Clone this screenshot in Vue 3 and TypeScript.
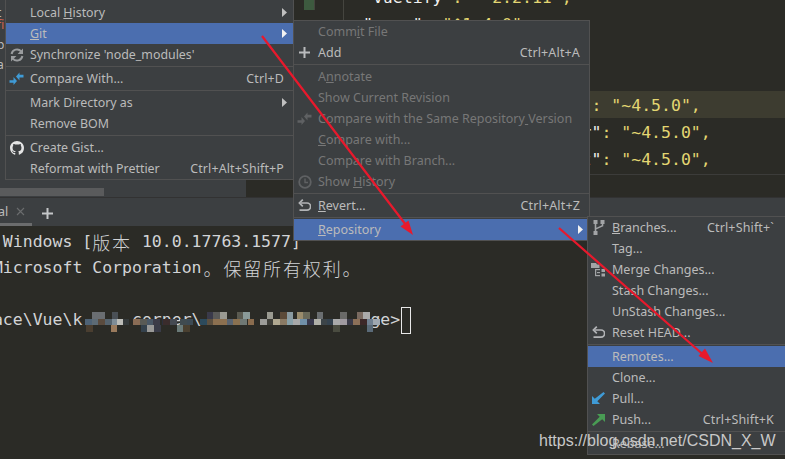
<script setup lang="ts">
type Row = { label?: string; mn?: number; sep?: boolean; off?: boolean; hl?: boolean; sub?: boolean; keys?: string; icon?: string };

const main: Row[] = [
  { label: 'Local History', mn: 6, sub: true },
  { label: 'Git', mn: 0, sub: true, hl: true },
  { label: "Synchronize 'node_modules'", icon: 'sync' },
  { sep: true },
  { label: 'Compare With...', icon: 'compare', keys: 'Ctrl+D' },
  { sep: true },
  { label: 'Mark Directory as', sub: true },
  { label: 'Remove BOM' },
  { sep: true },
  { label: 'Create Gist...', icon: 'github' },
  { label: 'Reformat with Prettier', keys: 'Ctrl+Alt+Shift+P' },
];
const git: Row[] = [
  { label: 'Commit File', mn: 4, off: true },
  { label: 'Add', icon: 'plus', keys: 'Ctrl+Alt+A' },
  { sep: true },
  { label: 'Annotate', mn: 1, off: true },
  { label: 'Show Current Revision', off: true },
  { label: 'Compare with the Same Repository Version', mn: 32, off: true, icon: 'compareOff' },
  { label: 'Compare with...', mn: 0, off: true },
  { label: 'Compare with Branch...', off: true },
  { label: 'Show History', mn: 5, off: true, icon: 'clock' },
  { sep: true },
  { label: 'Revert...', mn: 0, icon: 'undo', keys: 'Ctrl+Alt+Z' },
  { sep: true },
  { label: 'Repository', mn: 0, sub: true, hl: true },
];
const repo: Row[] = [
  { label: 'Branches...', mn: 0, icon: 'branch', keys: 'Ctrl+Shift+`' },
  { label: 'Tag...' },
  { label: 'Merge Changes...', icon: 'merge' },
  { label: 'Stash Changes...' },
  { label: 'UnStash Changes...' },
  { label: 'Reset HEAD...', icon: 'undo' },
  { sep: true },
  { label: 'Remotes...', hl: true },
  { label: 'Clone...' },
  { label: 'Pull...', icon: 'pull' },
  { label: 'Push...', icon: 'push', keys: 'Ctrl+Shift+K' },
  { sep: true },
  { label: 'Rebase...' },
];
const menus = [
  { id: 'main', rows: main },
  { id: 'git', rows: git },
  { id: 'repo', rows: repo },
];

const code = [
  { key: '"vuetify"', val: ':  "2.2.11",' },
  { key: '"sass"', val: ': "^1.4.0",' },
  { key: '', val: '' },
  { key: '', val: '' },
  { key: '"@vue/cli-plugin-babel"', val: ': "~4.5.0",', active: true },
  { key: '"@vue/cli-plugin-router"', val: ': "~4.5.0",' },
  { key: '"@vue/cli-plugin-eslint"', val: ': "~4.5.0",' },
];

const term = [
  [{ t: 'Microsoft Windows [' }, { t: '版本', cjk: true }, { t: ' 10.0.17763.1577]' }],
  [{ t: '(c) 2018 Microsoft Corporation' }, { t: '。保留所有权利。', cjk: true, shift: true }],
  [],
  [{ t: 'D:\\Workspace\\Vue\\k   l corner\\' + ' '.repeat(17) + 'ge>' }],
];

// pixelation of the hidden path: [x in 1/3 px from 70, row, colour]
const pixels: [number, number, string][] = [
  [45, 1, '#4e6275'], [65, 1, '#5d6b75'], [85, 1, '#5a4b3e'], [105, 1, '#55636e'], [125, 1, '#7f8d97'], [140, 1, '#bdbdb8'], [158, 1, '#34393a'],
  [190, 1, '#8a6c55'], [210, 1, '#595a55'], [230, 1, '#4a5866'], [250, 1, '#3c3c48'], [280, 1, '#3a2c2c'], [300, 1, '#454a52'], [330, 1, '#404b50'], [350, 1, '#3c4a54'],
  [390, 1, '#2c4a5c'], [410, 1, '#5c5040'], [430, 1, '#8c7050'], [450, 1, '#8c7050'], [470, 1, '#5a6470'], [490, 1, '#8a7150'], [510, 1, '#6f7874'], [533, 1, '#8a6c4e'],
  [570, 1, '#9c9c98'], [590, 1, '#3e3e38'], [610, 1, '#b0a890'], [630, 1, '#8a7a64'], [650, 1, '#88a0a8'], [670, 1, '#a8a8a8'], [690, 1, '#7090a8'], [712, 1, '#38384c'],
  [732, 1, '#b0b0a8'], [752, 1, '#3c4448'], [772, 1, '#34424e'], [790, 1, '#aaaaaa'], [810, 1, '#a09aa0'], [830, 1, '#3a3a48'], [850, 1, '#8c7058'], [870, 1, '#3c2828'], [890, 1, '#708090'], [910, 1, '#a0a8b0'],
  [65, 0, '#6a6e72'], [85, 0, '#6a6e72'], [125, 0, '#4a5056'],
  [410, 0, '#3a3a4a'], [430, 0, '#5a5a58'], [450, 0, '#9a9a92'], [500, 0, '#5a5a50'], [520, 0, '#8a9a98'], [590, 0, '#9a9a90'], [630, 0, '#5c4a38'], [650, 0, '#8a9aa0'],
  [680, 0, '#9a8c6c'], [700, 0, '#6a6a5a'], [740, 0, '#6a6e70'], [810, 0, '#6a6a68'], [860, 0, '#7a6a60'], [880, 0, '#aaaaaa'],
  [48, 2, '#4a3e30'], [122, 2, '#9a7a5c'], [212, 2, '#34414c'], [232, 2, '#9a9a98'], [252, 2, '#3a3c48'], [320, 2, '#6a7a78'], [340, 2, '#4a4030'], [790, 2, '#4a4c40'], [890, 2, '#5a6a78'],
];
const blocks = pixels.map(([zx, row, c]) => ({
  key: `${zx}-${row}`,
  style: { left: `${70 + zx / 3}px`, top: `${312 + row * 6.5}px`, background: c },
}));
</script>

<template>
  <div class="screen">
    <section class="editor">
      <aside class="tree">
        <div class="tree-lines">
          <span class="first">t</span>
          <span class="err">fi</span>
          <span>p</span>
          <span>a</span>
        </div>
        <div class="hscroll"><div class="thumb"></div></div>
      </aside>
      <div class="gutter"><div class="change"></div></div>
      <div class="code">
        <div v-for="(l, i) in code" :key="i" class="code-line" :class="{ active: l.active }">
          <span class="k">{{ l.key }}</span><span class="v">{{ l.val }}</span>
        </div>
        <div class="code-end"></div>
      </div>
    </section>

    <nav class="tabs">
      <div class="tab">
        <span class="tab-name">Terminal</span>
        <svg class="tab-x" width="9" height="9" viewBox="0 0 9 9"><path d="M1 1l7 7M8 1L1 8" stroke="#6b6d6e" stroke-width="1.1" /></svg>
      </div>
      <svg class="tab-add" width="11" height="11" viewBox="0 0 11 11"><path d="M5.5 0v11M0 5.5h11" stroke="#c4c6c8" stroke-width="2" /></svg>
    </nav>

    <section class="terminal">
      <div v-for="(line, i) in term" :key="i" class="term-line">
        <span v-for="(s, j) in line" :key="j" :class="{ cjk: s.cjk, shift: s.shift }">{{ s.t }}</span>
        <span v-if="i === 3" class="cursor"></span>
      </div>
    </section>
    <i v-for="b in blocks" :key="b.key" class="px" :style="b.style"></i>

    <div v-for="m in menus" :key="m.id" class="menu" :class="m.id">
      <template v-for="(r, i) in m.rows" :key="i">
        <div v-if="r.sep" class="sep"></div>
        <div v-else class="row" :class="{ off: r.off, hl: r.hl }">
          <span class="ico">
            <svg v-if="r.icon === 'sync'" width="14" height="14" viewBox="0 0 14 14" fill="none" stroke="#9a9c9e" stroke-width="2">
              <path d="M1.600 6a5.500 5.500 0 0 1 9.600-2.600M12.400 8a5.500 5.500 0 0 1-9.600 2.600" />
              <path d="M13 0.600v5.400H7.600L13 0.600zM1 13.400V8h5.400L1 13.400z" fill="#9a9c9e" stroke="none" />
            </svg>
            <svg v-else-if="r.icon === 'compare' || r.icon === 'compareOff'" width="15" height="14" viewBox="0 0 15 14">
              <path d="M7 4.500L10.500 0.500V2.800H14.500V5.500H10.500V8.500z" :fill="r.icon === 'compare' ? '#3f9bd6' : '#5f6163'" />
              <path d="M8 9L4.500 13V10.800H0.500V8.200H4.500V5z" :fill="r.icon === 'compare' ? '#3f9bd6' : '#5f6163'" />
            </svg>
            <svg v-else-if="r.icon === 'github'" width="14" height="14" viewBox="0 0 16 16">
              <path fill="#e4e4e4" d="M8 0C3.58 0 0 3.58 0 8c0 3.54 2.29 6.53 5.47 7.59.4.07.55-.17.55-.38 0-.19-.01-.82-.01-1.49-2.01.37-2.53-.49-2.69-.94-.09-.23-.48-.94-.82-1.13-.28-.15-.68-.52-.01-.53.63-.01 1.08.58 1.23.82.72 1.21 1.87.87 2.33.66.07-.52.28-.87.51-1.07-1.78-.2-3.64-.89-3.64-3.95 0-.87.31-1.59.82-2.15-.08-.2-.36-1.02.08-2.12 0 0 .67-.21 2.2.82.64-.18 1.32-.27 2-.27.68 0 1.36.09 2 .27 1.53-1.04 2.2-.82 2.2-.82.44 1.1.16 1.92.08 2.12.51.56.82 1.27.82 2.15 0 3.07-1.87 3.75-3.65 3.95.29.25.54.73.54 1.48 0 1.07-.01 1.93-.01 2.2 0 .21.15.46.55.38A8.013 8.013 0 0016 8c0-4.42-3.58-8-8-8z" />
            </svg>
            <svg v-else-if="r.icon === 'plus'" width="11" height="11" viewBox="0 0 11 11"><path d="M5.500 0v11M0 5.500h11" stroke="#b9bbbd" stroke-width="2" /></svg>
            <svg v-else-if="r.icon === 'clock'" width="14" height="14" viewBox="0 0 14 14" fill="none" stroke="#5f6163" stroke-width="1.800">
              <circle cx="7" cy="7" r="5.800" /><path d="M7 3.500V7.500H10" stroke-width="1.400" />
            </svg>
            <svg v-else-if="r.icon === 'undo'" width="13" height="13" viewBox="0 0 13 13" fill="none" stroke="#b2b4b6" stroke-width="1.700">
              <path d="M3 4h6a3 3 0 0 1 0 7.200H1.500" /><path d="M4.800 0.600L1.400 4l3.400 3.400" />
            </svg>
            <svg v-else-if="r.icon === 'branch'" width="12" height="15" viewBox="0 0 12 15" fill="#a2a4a6">
              <rect x="0.500" y="0" width="4" height="4" /><rect x="0.500" y="11" width="4" height="4" /><rect x="7.500" y="0" width="4" height="4" />
              <path d="M1.700 3h1.600v8H1.700zM8.800 3h1.500v3.200L3 9.500V8l5.800-2.700z" />
            </svg>
            <svg v-else-if="r.icon === 'merge'" width="15" height="14" viewBox="0 0 15 14" fill="#a2a4a6">
              <path d="M0 0h5l1 1.500h2.500V5H0z" /><rect x="4" y="6" width="5" height="1.200" /><rect x="4" y="6" width="1.200" height="7" /><rect x="4" y="12" width="5" height="1.200" />
              <rect x="6" y="9" width="3" height="1.200" /><rect x="10.500" y="6" width="3.500" height="3" /><rect x="10.500" y="10.500" width="3.500" height="3" />
            </svg>
            <svg v-else-if="r.icon === 'pull'" width="13" height="13" viewBox="0 0 13 13" fill="#3f9bd6"><path d="M11.500 0L13 1.500 5.300 9.200 8 12H0V4l2.800 2.700z" /></svg>
            <svg v-else-if="r.icon === 'push'" width="13" height="13" viewBox="0 0 13 13" fill="#499c54"><path d="M1.500 13L0 11.500 7.700 3.800 5 1h8v8l-2.800-2.700z" /></svg>
          </span>
          <span class="label">
            <template v-if="r.mn !== undefined">{{ r.label!.slice(0, r.mn) }}<u>{{ r.label![r.mn] }}</u>{{ r.label!.slice(r.mn + 1) }}</template>
            <template v-else>{{ r.label }}</template>
          </span>
          <span v-if="r.keys" class="keys">{{ r.keys }}</span>
          <svg v-if="r.sub" class="caret" width="5" height="9" viewBox="0 0 5 9"><path d="M0 0l5 4.500L0 9z" :fill="r.hl ? '#f2f2f2' : '#c0c0c0'" /></svg>
        </div>
      </template>
    </div>

    <svg class="arrows" width="785" height="459" viewBox="0 0 785 459">
      <path d="M262 36L409 229M559 228L707 358" stroke="#e8192c" stroke-width="2.200" fill="none" />
      <path d="M413 235L400.500 226.500 408.500 220.500zM713 363L698.500 356 705 348.500z" fill="#e8192c" />
    </svg>
    <span class="mark">https://blog.csdn.net/CSDN_X_W</span>
  </div>
</template>

<style>
html, body { margin: 0; background: #2b2b26; }
</style>

<style scoped>
.screen { position: relative; width: 785px; height: 459px; overflow: hidden; display: flex; flex-direction: column; background: #2b2b26; }

.editor { height: 198px; display: flex; flex: none; border-bottom: 1px solid #323232; box-sizing: border-box; overflow: hidden; }
.tree { width: 246px; flex: none; background: #3c3f41; display: flex; flex-direction: column; justify-content: flex-end; position: relative; }
.tree-lines { position: absolute; left: -3px; top: 3px; display: flex; flex-direction: column; font: 12px/20px "Noto Sans", sans-serif; color: #bbb; }
.first { margin-bottom: -8px; }
.err { color: #d0654f; }
.hscroll { height: 8px; margin-bottom: 1px; }
.thumb { width: 104px; height: 8px; background: #5a5b5c; }
.gutter { width: 97px; flex: none; position: relative; }
.change { position: absolute; left: 58px; top: 0; width: 10px; height: 10px; background: #3d5a3f; border-right: 1px solid #45453f; }
.code { flex: 1; margin-top: -17px; border-left: 1px solid #45453f; font: 16.5px/29px "DejaVu Sans Mono", monospace; white-space: pre; min-width: 0; }
.code-line { height: 27px; padding-left: 19px; }
.code-line.active { background: #3d3c30; }
.k { color: #f0f0ee; }
.v { color: #e3d672; }
.code-end { height: 2px; border-bottom: 1px solid #3c3c3a; }

.tabs { height: 28px; flex: none; background: #3c3f41; display: flex; align-items: center; box-sizing: border-box; }
.tab { width: 32px; height: 28px; box-sizing: border-box; border-bottom: 3px solid #6b6c6d; display: flex; align-items: center; overflow: hidden; padding-top: 2px; }
.tab-name { font: 12.500px "Noto Sans", sans-serif; color: #bbb; margin-left: -43px; }
.tab-x { margin-left: 8px; flex: none; }
.tab-add { margin-left: 10px; margin-top: 2px; }

.terminal { flex: 1; padding-top: 3px; font: 16.500px/26px "DejaVu Sans Mono", "Noto Sans CJK SC", monospace; color: #d2d4d6; white-space: pre; overflow: hidden; }
.term-line { height: 26px; margin-left: -96.500px; display: flex; align-items: center; }
.cjk { font-size: 18px; letter-spacing: 1.860px; font-family: "Noto Sans CJK SC", sans-serif; font-weight: 300; }
.shift { margin-left: 2px; }
.cursor { width: 8px; height: 25px; border: 1px solid #e8e8e8; margin-left: 1px; flex: none; }
.px { position: absolute; width: 6.600px; height: 6.500px; }

.menu { position: absolute; box-sizing: border-box; background: #3c3f41; border: 1px solid #515151; font: 12.500px "Noto Sans", sans-serif; color: #bbb; }
.main { left: 5px; top: -1px; width: 289px; height: 181px; padding-top: 2px; font-size: 12.400px; }
.git { left: 293px; top: 20px; width: 297px; height: 221px; }
.repo { left: 587px; top: 216px; width: 210px; height: 239px; }
.repo .row { padding-right: 22px; }
.row { height: 21px; display: flex; align-items: center; padding: 0 9px 0 0; position: relative; white-space: pre; }
.row.off { color: #777; }
.row.hl { background: #4b6eaf; }
.ico { width: 24px; flex: none; display: flex; justify-content: center; padding-right: 3px; box-sizing: border-box; }
.label { flex: 1; }
.label u { text-underline-offset: 1px; }
.keys { margin-left: 8px; letter-spacing: 0.150px; }
.caret { position: absolute; right: 6px; top: 6px; }
.sep { height: 3px; position: relative; }
.sep::after { content: ""; position: absolute; left: 0; right: 0; top: 1px; height: 1px; background: #515151; }

.arrows { position: absolute; left: 0; top: 0; pointer-events: none; }
.mark { position: absolute; left: 539px; top: 432px; font: 16px "Liberation Sans", sans-serif; color: #c8c8c8; white-space: pre; }
</style>
